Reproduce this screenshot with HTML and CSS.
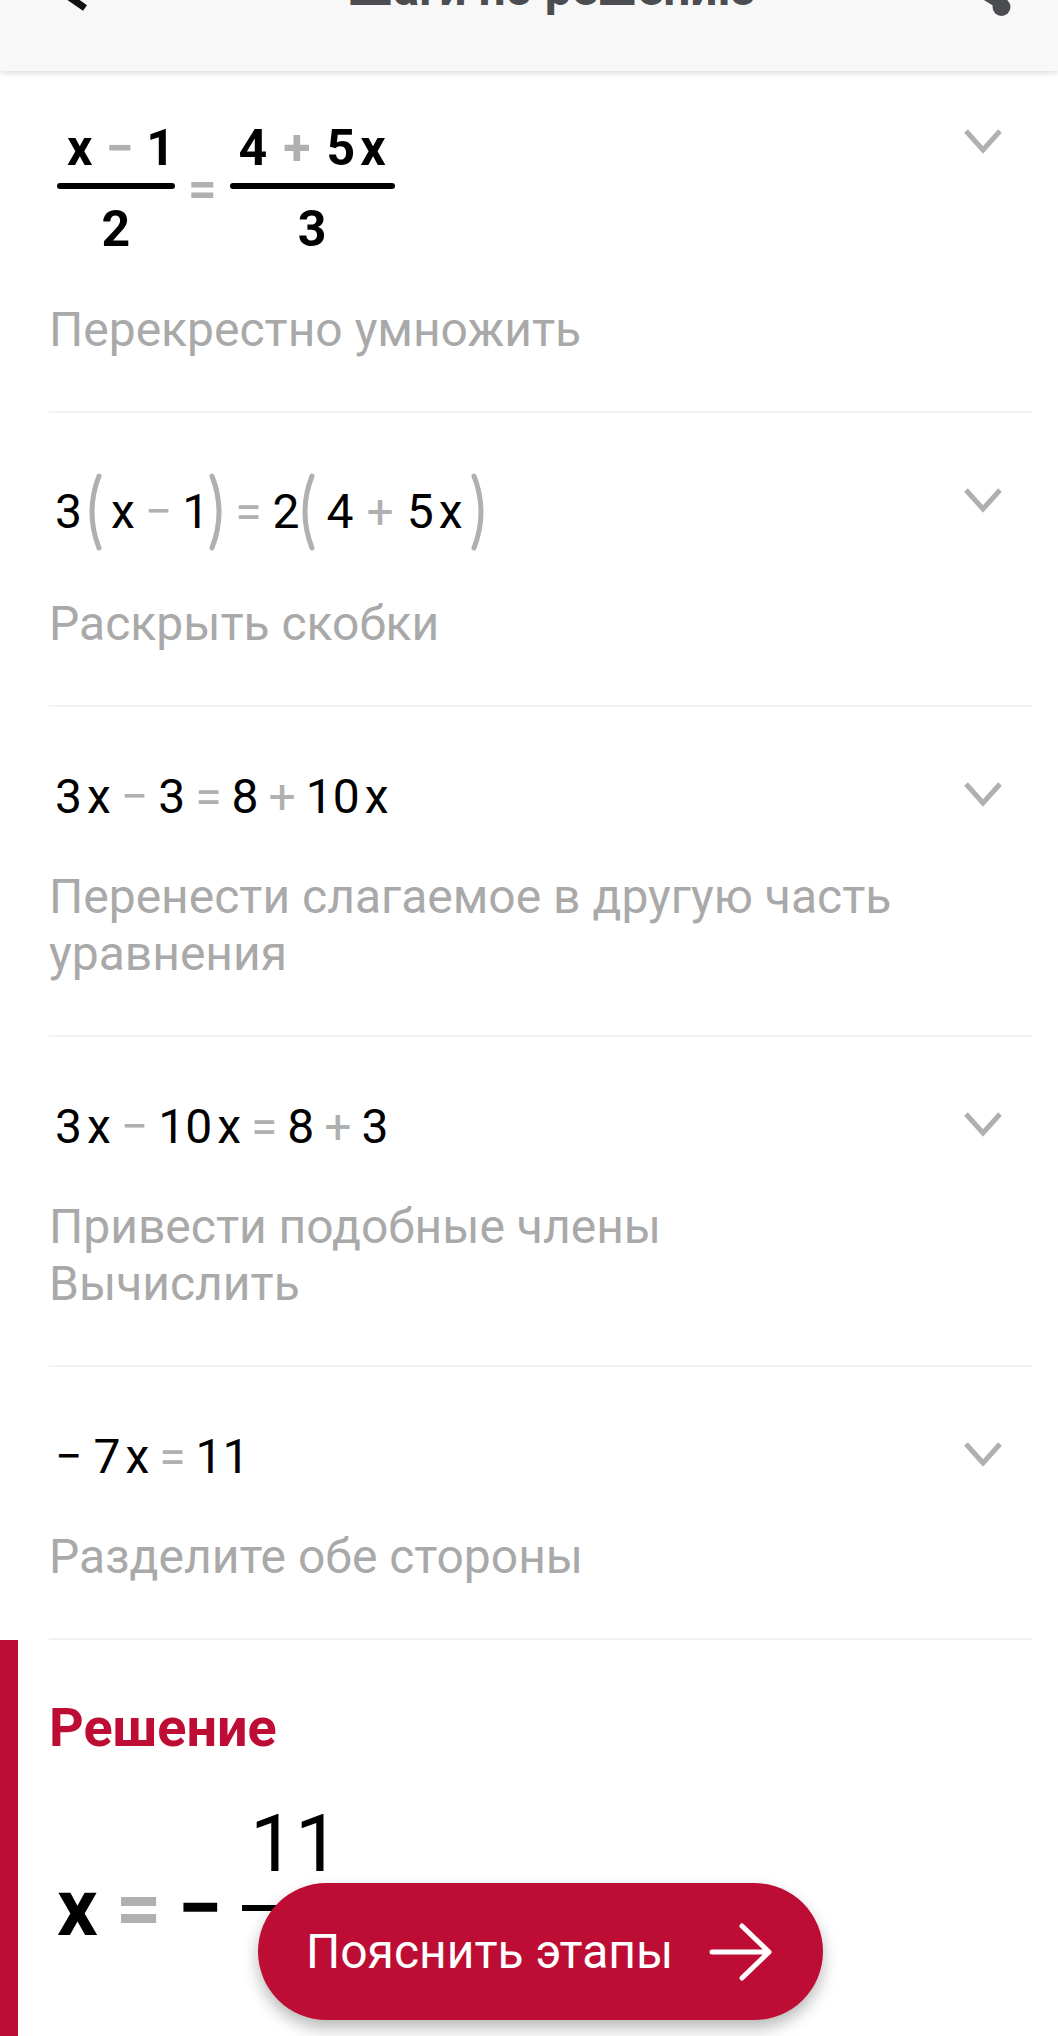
FILE: index.html
```html
<!DOCTYPE html>
<html lang="ru">
  <head>
    <meta charset="UTF-8" />
    <title>Шаги по решению</title>
    <link rel="stylesheet" href="styles.css">
  </head>
  <body>
    <header class="topbar">
      <svg class="back-icon" width="30" height="14" viewBox="0 0 30 14"><path d="M2 -8 L25 8" /></svg>
      <h1>Шаги по решению</h1>
      <svg class="share-icon" width="40" height="20" viewBox="0 0 40 20"><path d="M9 -4 L27 7" /><circle cx="27.5" cy="7" r="9" /></svg>
    </header>

    <section class="step step-first">
      <div class="step-head">
        <div class="math math-bold">
          <div class="frac frac-small">
            <div class="num">x<span class="op">−</span>1</div>
            <div class="bar"></div>
            <div class="den">2</div>
          </div>
          <span class="eq">=</span>
          <div class="frac">
            <div class="num">4<span class="op">+</span>5<span class="var">x</span></div>
            <div class="bar"></div>
            <div class="den">3</div>
          </div>
        </div>
        <svg class="chevron" width="40" height="26" viewBox="0 0 40 26"><path d="M3 3 L20 22 L37 3" /></svg>
      </div>
      <p class="label">Перекрестно умножить</p>
    </section>

    <section class="step">
      <div class="step-head">
        <div class="math math-tall">
          3
          <svg class="paren" width="20" height="78" viewBox="0 0 20 78"><path d="M15 3 Q1 39 15 75" /></svg>
          <span class="var">x</span><span class="op">−</span>1
          <svg class="paren paren-close" width="20" height="78" viewBox="0 0 20 78"><path d="M5 3 Q19 39 5 75" /></svg>
          <span class="eq">=</span>2
          <svg class="paren paren-tight" width="20" height="78" viewBox="0 0 20 78"><path d="M15 3 Q1 39 15 75" /></svg>
          <span>4</span><span class="op op-wide">+</span>5<span class="var">x</span>
          <svg class="paren paren-end" width="20" height="78" viewBox="0 0 20 78"><path d="M5 3 Q19 39 5 75" /></svg>
        </div>
        <svg class="chevron" width="40" height="26" viewBox="0 0 40 26"><path d="M3 3 L20 22 L37 3" /></svg>
      </div>
      <p class="label">Раскрыть скобки</p>
    </section>

    <section class="step">
      <div class="step-head">
        <div class="math">3<span class="var">x</span><span class="op">−</span>3<span class="op">=</span>8<span class="op">+</span>10<span class="var">x</span></div>
        <svg class="chevron" width="40" height="26" viewBox="0 0 40 26"><path d="M3 3 L20 22 L37 3" /></svg>
      </div>
      <p class="label">Перенести слагаемое в другую часть<br />уравнения</p>
    </section>

    <section class="step">
      <div class="step-head">
        <div class="math">3<span class="var">x</span><span class="op">−</span>10<span class="var">x</span><span class="op">=</span>8<span class="op">+</span>3</div>
        <svg class="chevron" width="40" height="26" viewBox="0 0 40 26"><path d="M3 3 L20 22 L37 3" /></svg>
      </div>
      <p class="label">Привести подобные члены<br />Вычислить</p>
    </section>

    <section class="step">
      <div class="step-head">
        <div class="math"><span class="minus">−</span>7<span class="var">x</span><span class="op">=</span>11</div>
        <svg class="chevron" width="40" height="26" viewBox="0 0 40 26"><path d="M3 3 L20 22 L37 3" /></svg>
      </div>
      <p class="label">Разделите обе стороны</p>
    </section>

    <section class="solution">
      <h2>Решение</h2>
      <div class="answer">
        <span class="answer-x">x</span>
        <span class="answer-eq">=</span>
        <span class="answer-minus">−</span>
        <div class="answer-frac">
          <div class="answer-num">11</div>
          <div class="answer-bar"></div>
          <div class="answer-den">7</div>
        </div>
      </div>
    </section>

    <button class="explain">
      Пояснить этапы
      <svg width="64" height="58" viewBox="0 0 64 58"><path d="M3 29 H60 M33 3 L60 29 L33 55" /></svg>
    </button>
  </body>
</html>
```

FILE: styles.css
```css
html,
body {
  height: 2036px;
  overflow: hidden;
}

body {
  margin: 0;
  background: #fff;
  color: #000;
  font-family: Roboto, "Noto Sans", sans-serif;
}

.topbar {
  height: 71px;
  background: #f8f8f8;
  box-shadow: 0 2px 6px rgba(0, 0, 0, 0.14);
  display: flex;
  justify-content: space-between;
  align-items: flex-start;
  padding: 0 44px 0 60px;
  overflow: hidden;
}

.topbar h1 {
  margin: -41px 0 0 40px;
  font-size: 48px;
  line-height: 60px;
  font-weight: 700;
  color: #4b4d50;
}

.back-icon path {
  fill: none;
  stroke: #111;
  stroke-width: 7;
}

.share-icon path {
  fill: none;
  stroke: #4b4d50;
  stroke-width: 6;
}

.share-icon circle {
  fill: #4b4d50;
}

.step {
  margin: 0 26px 0 49px;
  padding: 60px 0 53px;
  border-bottom: 2px solid #f2f2f2;
}

.step-first {
  padding-top: 49px;
}

.step-head {
  display: flex;
  justify-content: space-between;
  align-items: flex-start;
  padding-right: 29px;
}

.chevron {
  margin-top: 14px;
}

.step-first .chevron {
  margin-top: 8px;
}

.chevron path {
  fill: none;
  stroke: #b0b0b0;
  stroke-width: 5;
}

.math {
  font-size: 48px;
  line-height: 60px;
  margin: 0 0 41px 6px;
  display: flex;
  align-items: center;
  white-space: pre;
}

.math-tall {
  height: 78px;
  margin-bottom: 44px;
  white-space: normal;
}

.var {
  margin-left: 5px;
}

.op {
  color: #b0b0b0;
  margin: 0 10px;
}

.op-wide {
  margin: 0 13px;
}

.eq {
  color: #b0b0b0;
  margin: 0 11px 0 6px;
}

.minus {
  margin-right: 11px;
}

.paren {
  margin: 0 2px;
}

.paren-close {
  margin-left: -2px;
}

.paren-tight {
  margin: 0 10px 0 -3px;
}

.paren-end {
  margin-left: 6px;
}

.paren path {
  fill: none;
  stroke: #b0b0b0;
  stroke-width: 5;
  stroke-linecap: round;
}

.math-bold {
  font-weight: 700;
  font-size: 50px;
  line-height: 56px;
  margin: 0 0 44px 8px;
}

.math-bold .op {
  margin: 0 16px;
}

.math-bold .eq {
  margin: 0 13px;
}

.frac {
  display: flex;
  flex-direction: column;
  align-items: center;
}

.frac-small .op {
  margin: 0 13px;
}

.num,
.den {
  display: flex;
  padding: 0 9px;
}

.frac-small .num {
  padding: 0 0 0 10px;
}

.bar {
  align-self: stretch;
  height: 6px;
  margin: 7px 0 12px;
  border-radius: 3px;
  background: #000;
}

.label {
  margin: 0;
  color: #a9a9a9;
  font-size: 48px;
  line-height: 57px;
}

.solution {
  height: 396px;
  border-left: 18px solid #be0d34;
  padding-left: 31px;
}

.solution h2 {
  margin: 0;
  padding-top: 58px;
  color: #be0d34;
  font-size: 54px;
  line-height: 60px;
  font-weight: 700;
}

.answer {
  display: flex;
  align-items: center;
  margin-top: 41px;
  margin-left: 8px;
}

.answer-x {
  font-size: 80px;
  font-weight: 700;
}

.answer-eq {
  font-size: 80px;
  font-weight: 700;
  color: #b0b0b0;
  margin: 0 16px 0 18px;
}

.answer-minus {
  font-size: 80px;
  font-weight: 700;
}

.answer-frac {
  margin-left: 20px;
  display: flex;
  flex-direction: column;
  align-items: center;
  width: 106px;
  font-size: 80px;
  line-height: 90px;
}

.answer-bar {
  align-self: stretch;
  height: 6px;
  margin: 16px 0;
  background: #000;
}

.explain {
  position: absolute;
  left: 258px;
  top: 1883px;
  width: 565px;
  height: 137px;
  display: flex;
  align-items: center;
  justify-content: space-between;
  padding: 0 50px 0 48px;
  border: none;
  border-radius: 69px;
  background: #be0d34;
  color: #fff;
  font-family: inherit;
  font-size: 48px;
  box-shadow: 0 8px 16px rgba(0, 0, 0, 0.28);
}

.explain svg path {
  fill: none;
  stroke: #fff;
  stroke-width: 5;
  stroke-linecap: round;
  stroke-linejoin: round;
}
```
